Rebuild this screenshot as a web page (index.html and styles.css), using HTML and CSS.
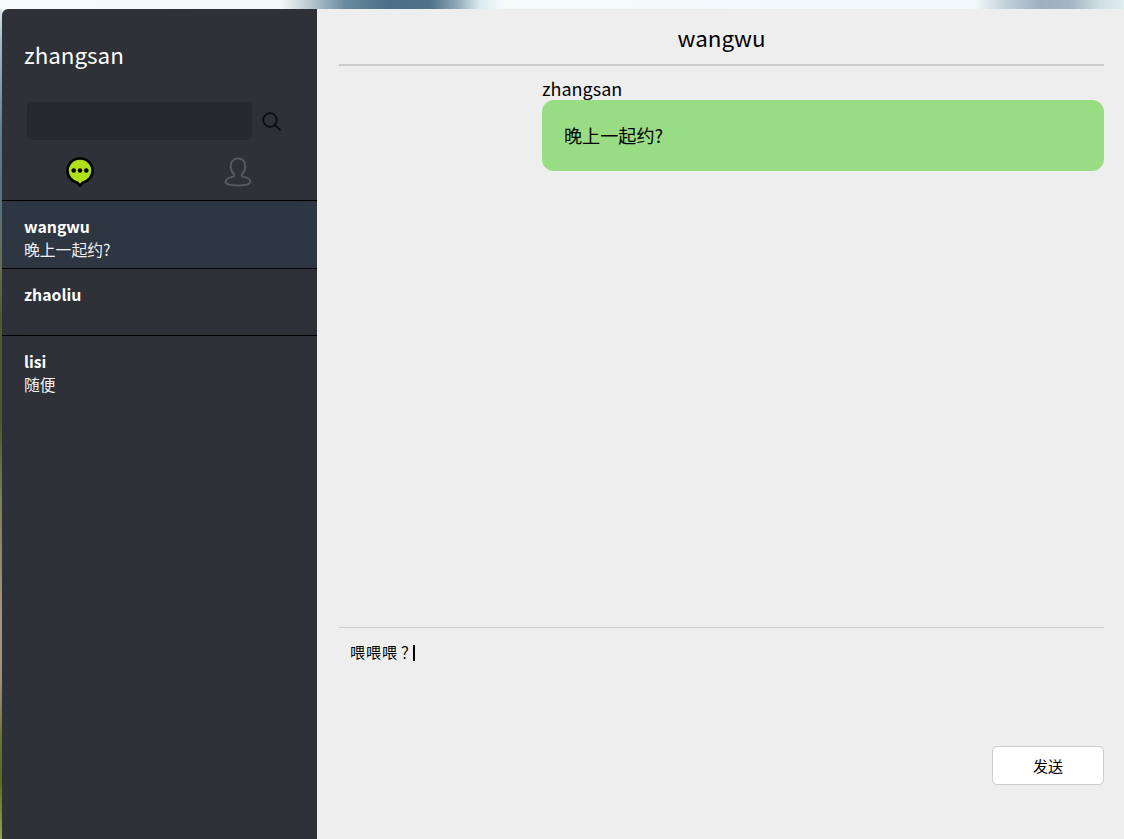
FILE: index.html
```html
<!DOCTYPE html>
<html lang="zh">
<head>
<meta charset="utf-8">
<title>chat</title>
<link rel="stylesheet" href="styles.css">
</head>
<body>
<div class="app">
  <aside class="sidebar">
    <div class="profile">zhangsan</div>
    <div class="search">
      <div class="search-input"></div>
      <svg class="search-icon" width="20" height="20" viewBox="0 0 20 20" fill="none" stroke="#0b0c0e">
        <circle cx="8" cy="8" r="6.800" stroke-width="1.800"/>
        <path d="M13.200 13.200 18.600 18.400" stroke-width="2"/>
      </svg>
    </div>
    <div class="tabs">
      <div class="tab">
        <svg width="28" height="30" viewBox="0 0 28 30">
          <path d="M14 1.400C6.900 1.400 1.400 6.900 1.400 13.600c0 6 4.300 10.900 10 12.100L14 28.800l2.600-3.100c5.700-1.200 10-6.100 10-12.100C26.600 6.900 21.100 1.400 14 1.400Z" fill="#b0e01a" stroke="#050505" stroke-width="2.700"/>
          <circle cx="7.700" cy="13.500" r="2.300" fill="#050505"/>
          <circle cx="14" cy="13.500" r="2.300" fill="#050505"/>
          <circle cx="20.300" cy="13.500" r="2.300" fill="#050505"/>
        </svg>
      </div>
      <div class="tab">
        <svg width="28" height="30" viewBox="0 0 28 30" fill="none" stroke="#555a63" stroke-width="2">
          <path d="M14 1.500c-4.300 0-7.300 3.200-7.300 7.800 0 3.300 1.300 6 3.200 7.800.7.700.6 1.900-.4 2.400-2.100.5-7.900 1.600-7.900 5 0 2.600 5.500 3.900 12.400 3.900s12.400-1.300 12.400-3.900c0-3.400-5.800-4.500-7.900-5-1-.5-1.100-1.700-.4-2.400 1.900-1.800 3.200-4.500 3.200-7.800 0-4.600-3-7.800-7.300-7.800Z"/>
        </svg>
      </div>
    </div>
    <ul class="sessions">
      <li class="session session-active">
        <div class="session-name">wangwu</div>
        <div class="session-last">晚上一起约?</div>
      </li>
      <li class="session">
        <div class="session-name">zhaoliu</div>
        <div class="session-last"></div>
      </li>
      <li class="session">
        <div class="session-name">lisi</div>
        <div class="session-last">随便</div>
      </li>
    </ul>
  </aside>
  <main class="chat">
    <header class="chat-title">wangwu</header>
    <section class="messages">
      <div class="message">
        <div class="message-author">zhangsan</div>
        <div class="bubble">晚上一起约?</div>
      </div>
    </section>
    <section class="composer">
      <div class="composer-text">喂喂喂<span class="composer-mark">？</span><span class="caret"></span></div>
      <div class="composer-actions">
        <button class="send" type="button">发送</button>
      </div>
    </section>
  </main>
</div>
</body>
</html>
```
FILE: styles.css
```css
* {
  box-sizing: border-box;
}

html,
body {
  margin: 0;
  height: 839px;
  overflow: hidden;
}

body {
  font-family: "Noto Sans CJK SC", "Noto Sans", sans-serif;
  background-color: #f5fcfc;
  background-image:
    linear-gradient(to right,
      #f8fbfb 0, #f4f8f9 280px, #b8c8d0 310px, #6a8a9e 345px, #4a6f88 390px, #4f7388 430px, #8ba3b3 455px,
      #dcebf0 480px, #f5fcfc 505px, #f1f8fa 975px, #c5d2da 1005px, #9db0bf 1040px, #a3b5c2 1070px,
      #d0dfe5 1100px, #e0eef0 1124px),
    linear-gradient(to bottom,
      #e8eef0 0, #a9bcc6 40px, #5f7f92 130px, #59717f 200px, #6a6f55 260px, #4f5a2a 320px,
      #4a5a26 420px, #7b8050 500px, #a8948a 620px, #a38f78 680px, #6a7432 740px, #5c6c1f 780px, #97a452 839px);
  background-size: 100% 9px, 2px 100%;
  background-repeat: no-repeat;
}

.app {
  display: flex;
  height: 830px;
  margin: 9px 0 0 2px;
  border-top-left-radius: 6px;
  overflow: hidden;
}

.sidebar {
  flex: 0 0 315px;
  width: 315px;
  background: #2e3138;
  color: #fff;
}

.profile {
  height: 93px;
  padding: 27px 0 0 22px;
  font-size: 22.400px;
  line-height: 36px;
}

.search {
  display: flex;
  align-items: center;
  height: 38px;
  padding-left: 25px;
}

.search-input {
  width: 225px;
  height: 38px;
  background: #26292e;
  border-radius: 5px;
}

.search-icon {
  margin: 2px 0 0 10px;
}

.tabs {
  display: flex;
  height: 60px;
  padding-top: 17px;
}

.tab {
  display: flex;
  justify-content: center;
  width: 156px;
  height: 30px;
}

.tab + .tab {
  width: 159px;
}

.tab svg {
  display: block;
}

.sessions {
  margin: 0;
  padding: 0;
  list-style: none;
}

.session {
  height: 67.500px;
  padding: 14px 0 0 22px;
  border-top: 1px solid #000;
  font-size: 15.800px;
  line-height: 23px;
}

.session-active {
  background: #2e3642;
}

.session-name {
  height: 23px;
  font-weight: 700;
}

.session-last {
  height: 23px;
  color: #f0f0f0;
}

.chat {
  flex: 1;
  display: flex;
  flex-direction: column;
  min-width: 0;
  padding: 0 20px 0 22px;
  background: #eee;
  color: #000;
}

.chat-title {
  flex: none;
  height: 57px;
  border-bottom: 2px solid #ccc;
  font-size: 22.400px;
  line-height: 56px;
  text-align: center;
}

.messages {
  flex: none;
  height: 561px;
  padding-left: 203px;
}

.message-author {
  height: 34px;
  margin-bottom: -20px;
  padding-top: 10px;
  font-size: 18px;
  line-height: 24px;
}

.bubble {
  height: 71px;
  margin-top: 20px;
  padding: 0 22px;
  background: #98dd84;
  border-radius: 12px;
  font-size: 18.100px;
  line-height: 71px;
}

.composer {
  flex: 1;
  border-top: 1px solid #ccc;
}

.composer-text {
  height: 118px;
  padding: 13px 0 0 11px;
  font-size: 15px;
  letter-spacing: 1px;
  line-height: 22px;
}

.composer-mark {
  margin: 0 -3px 0 3px;
}

.caret {
  display: inline-block;
  width: 2px;
  height: 16px;
  margin-left: -1px;
  vertical-align: -3px;
  background: #000;
}

.composer-actions {
  display: flex;
  justify-content: flex-end;
}

.send {
  width: 112px;
  height: 39px;
  padding: 0;
  background: #fff;
  border: 1px solid #ccc;
  border-radius: 5px;
  color: #000;
  font-family: inherit;
  font-size: 15px;
}
```
